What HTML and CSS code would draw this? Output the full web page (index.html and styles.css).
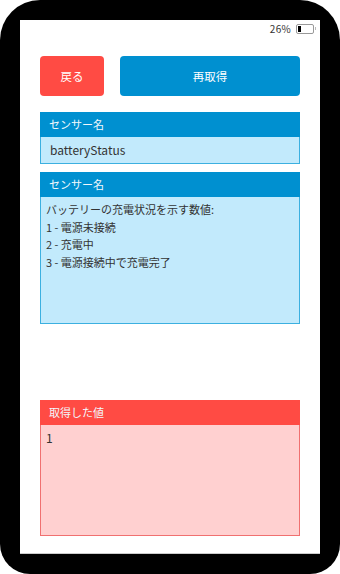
FILE: index.html
```html
<!DOCTYPE html>
<html lang="ja">
<head>
    <meta charset="UTF-8">
    <meta name="viewport" content="width=device-width, initial-scale=1.0">
    <title>センサー詳細</title>
    <link rel="stylesheet" href="styles.css">
</head>
<body>
    <div class="device">
        <div class="screen">
            <div class="status-bar">
                <span class="battery-level">26%</span>
                <span class="battery"><span class="battery-fill"></span></span>
            </div>

            <div class="content">
                <div class="buttons">
                    <a href="#" class="btn btn-back">戻る</a>
                    <a href="#" class="btn btn-reload">再取得</a>
                </div>

                <div class="panel panel-blue">
                    <div class="panel-header">センサー名</div>
                    <div class="panel-body panel-name">batteryStatus</div>
                </div>

                <div class="panel panel-blue">
                    <div class="panel-header">センサー名</div>
                    <div class="panel-body panel-desc">バッテリーの充電状況を示す数値:<br>1 - 電源未接続<br>2 - 充電中<br>3 - 電源接続中で充電完了</div>
                </div>

                <div class="panel panel-red">
                    <div class="panel-header">取得した値</div>
                    <div class="panel-body panel-value">1</div>
                </div>
            </div>
        </div>
    </div>
</body>
</html>
```

FILE: styles.css
```css
body {
    font-family: "Noto Sans CJK JP", "Noto Sans", sans-serif;
    background-color: #fff;
    margin: 0;
    padding: 0;
}
.device {
    width: 340px;
    height: 574px;
    box-sizing: border-box;
    padding: 20px;
    background-color: #000;
    border-radius: 40px 40px 30px 30px;
}
.screen {
    width: 300px;
    height: 534px;
    background-color: #fff;
    border-bottom: 1px solid #ccc;
    box-sizing: border-box;
}
.status-bar {
    height: 16px;
    box-sizing: border-box;
    display: flex;
    justify-content: flex-end;
    align-items: center;
    padding: 1px 6px 0 0;
    font-size: 10px;
    color: #333;
}
.battery-level {
    margin-right: 5px;
    letter-spacing: 0.3px;
}
.battery {
    width: 14px;
    height: 6px;
    border: 1px solid #999;
    border-radius: 2px;
    position: relative;
    display: flex;
    padding: 1px;
}
.battery::after {
    content: "";
    position: absolute;
    right: -3px;
    top: 2px;
    width: 1px;
    height: 3px;
    background-color: #bbb;
}
.battery-fill {
    width: 3px;
    height: 6px;
    background-color: #000;
}
.content {
    padding: 20px 20px 0 20px;
}
.buttons {
    display: flex;
    gap: 16px;
    margin-bottom: 16px;
}
.btn {
    height: 40px;
    display: flex;
    align-items: center;
    justify-content: center;
    border-radius: 4px;
    color: #fff;
    font-size: 11.5px;
    text-decoration: none;
}
.btn-back {
    width: 64px;
    background-color: #ff4b44;
}
.btn-reload {
    flex: 1;
    background-color: #0090d0;
}
.panel {
    margin-bottom: 8px;
}
.panel-header {
    height: 25px;
    line-height: 25px;
    padding-left: 9px;
    font-size: 11px;
    color: #f2f8fc;
}
.panel-body {
    box-sizing: border-box;
    font-size: 11px;
    color: #333;
}
.panel-blue .panel-header {
    background-color: #0090d0;
}
.panel-blue .panel-body {
    background-color: #c2eafc;
    border: 1px solid #3cb0e0;
    border-top: none;
}
.panel-name {
    height: 27px;
    line-height: 26px;
    padding-left: 9px;
    font-size: 12px;
}
.panel-desc {
    height: 127px;
    padding: 4px 5px;
    line-height: 17.5px;
}
.panel-red {
    margin-top: 76px;
}
.panel-red .panel-header {
    background-color: #ff4b44;
}
.panel-red .panel-body {
    background-color: #ffd0d0;
    border: 1px solid #f07070;
    border-top: none;
}
.panel-value {
    height: 111px;
    padding: 4px 5px;
    line-height: 17.5px;
    font-size: 12px;
}
```
